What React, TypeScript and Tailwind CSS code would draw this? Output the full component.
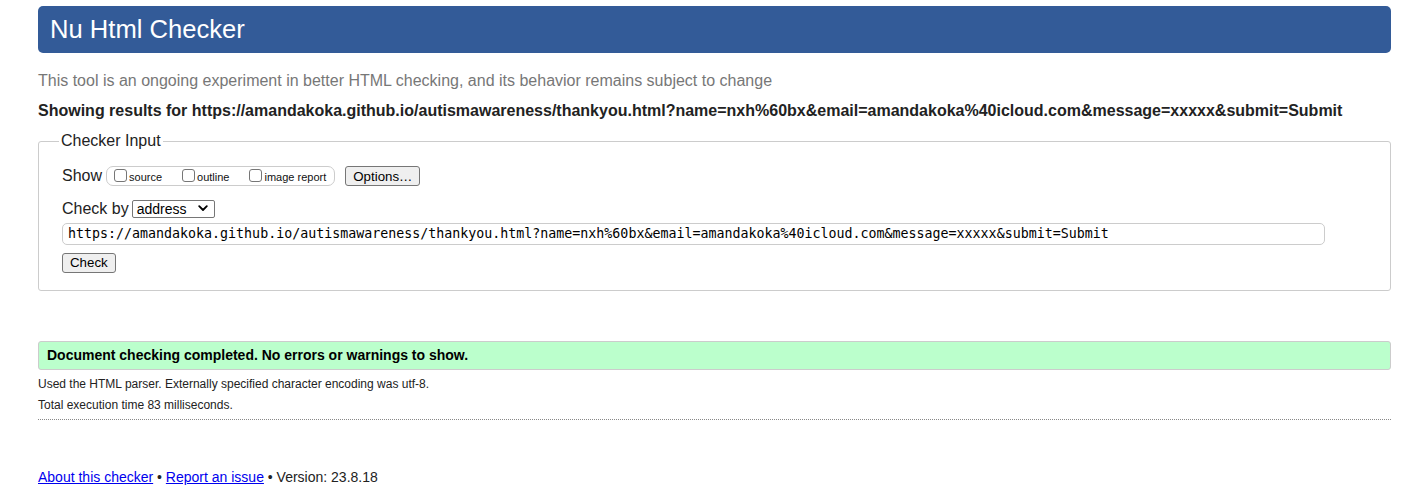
import React from "react";

const sans = { fontFamily: '"Liberation Sans", Arial, sans-serif' };

const Box = ({ label }: { label: string }) => (
  <label className="flex items-center gap-[2px] mr-[20px] last:mr-0">
    <span className="w-[13px] h-[13px] border border-[#767676] rounded-[3px] bg-white" />
    <span className="text-[11px] leading-none mt-[3px] text-[#111]">{label}</span>
  </label>
);

const Btn = ({ children }: { children: React.ReactNode }) => (
  <button className="h-[20px] px-[7px] border border-[#767676] rounded-[3px] bg-[#efefef] text-[13.3px] leading-none text-black">
    {children}
  </button>
);

export default function App() {
  const url =
    "https://amandakoka.github.io/autismawareness/thankyou.html?name=nxh%60bx&email=amandakoka%40icloud.com&message=xxxxx&submit=Submit";
  return (
    <div className="bg-white min-h-screen pl-[38px] pr-[31px] pt-[6px] text-[#222]" style={sans}>
      <header className="h-[47px] rounded-[5px] bg-[#335b98] flex items-center px-[12px]">
        <h1 className="text-white text-[25.6px] leading-none">Nu Html Checker</h1>
      </header>

      <p className="mt-[18px] text-[16px] leading-[20px] text-[#777]">
        This tool is an ongoing experiment in better HTML checking, and its behavior remains subject to change
      </p>
      <p className="mt-[10px] text-[16px] leading-[20px] font-bold text-[#222]">Showing results for {url}</p>

      <fieldset className="mt-[11px] border border-[#ccc] rounded-[3px] pl-[23px] pr-[65px] pt-[15px] pb-[16px]">
        <legend className="ml-[-3px] px-[2px] text-[16px] leading-[18px] text-[#222]">Checker Input</legend>

        <div className="flex items-center h-[21px]">
          <span className="text-[16px] mr-[4px]">Show</span>
          <div className="flex items-center h-[20px] border border-[#ccc] rounded-[7px] pl-[7px] pr-[8px]">
            <Box label="source" />
            <Box label="outline" />
            <Box label="image report" />
          </div>
          <span className="ml-[10px]">
            <Btn>Options…</Btn>
          </span>
        </div>

        <div className="flex items-center mt-[13px] h-[19px]">
          <span className="text-[16px] mr-[3px]">Check by</span>
          <div className="w-[83px] h-[18px] border border-[#767676] rounded-[2px] bg-white flex items-center justify-between px-[4px]">
            <span className="text-[14px] leading-none text-black">address</span>
            <svg width="10" height="7" viewBox="0 0 10 7" className="mr-[2px]">
              <path d="M1.2 1.2 L5 5 L8.8 1.2" fill="none" stroke="#000" strokeWidth="1.8" strokeLinecap="round" strokeLinejoin="round" />
            </svg>
          </div>
        </div>

        <div
          className="mt-[5px] h-[22px] border border-[#ccc] rounded-[5px] flex items-center px-[5px] text-[13.3px] text-black whitespace-nowrap overflow-hidden"
          style={{ fontFamily: '"DejaVu Sans Mono", "Liberation Mono", monospace' }}
        >
          {url}
        </div>

        <div className="mt-[5px]">
          <Btn>Check</Btn>
        </div>
      </fieldset>

      <div className="mt-[50px] h-[29px] bg-[#bbffcc] border border-[#ccc] rounded-[3px] flex items-center px-[8px]">
        <p className="text-[14px] font-bold text-black">Document checking completed. No errors or warnings to show.</p>
      </div>

      <p className="mt-[7px] text-[12px] leading-[14px] text-[#222]">
        Used the HTML parser. Externally specified character encoding was utf-8.
      </p>
      <p className="mt-[7px] text-[12px] leading-[14px] text-[#222]">Total execution time 83 milliseconds.</p>
      <div className="mt-[7px] border-t border-dotted border-[#888]" />

      <p className="mt-[49px] text-[14px] leading-[16px] text-[#222]">
        <a href="#" className="text-[#0000ee] underline">About this checker</a>
        {" • "}
        <a href="#" className="text-[#0000ee] underline">Report an issue</a>
        {" • Version: 23.8.18"}
      </p>
    </div>
  );
}
